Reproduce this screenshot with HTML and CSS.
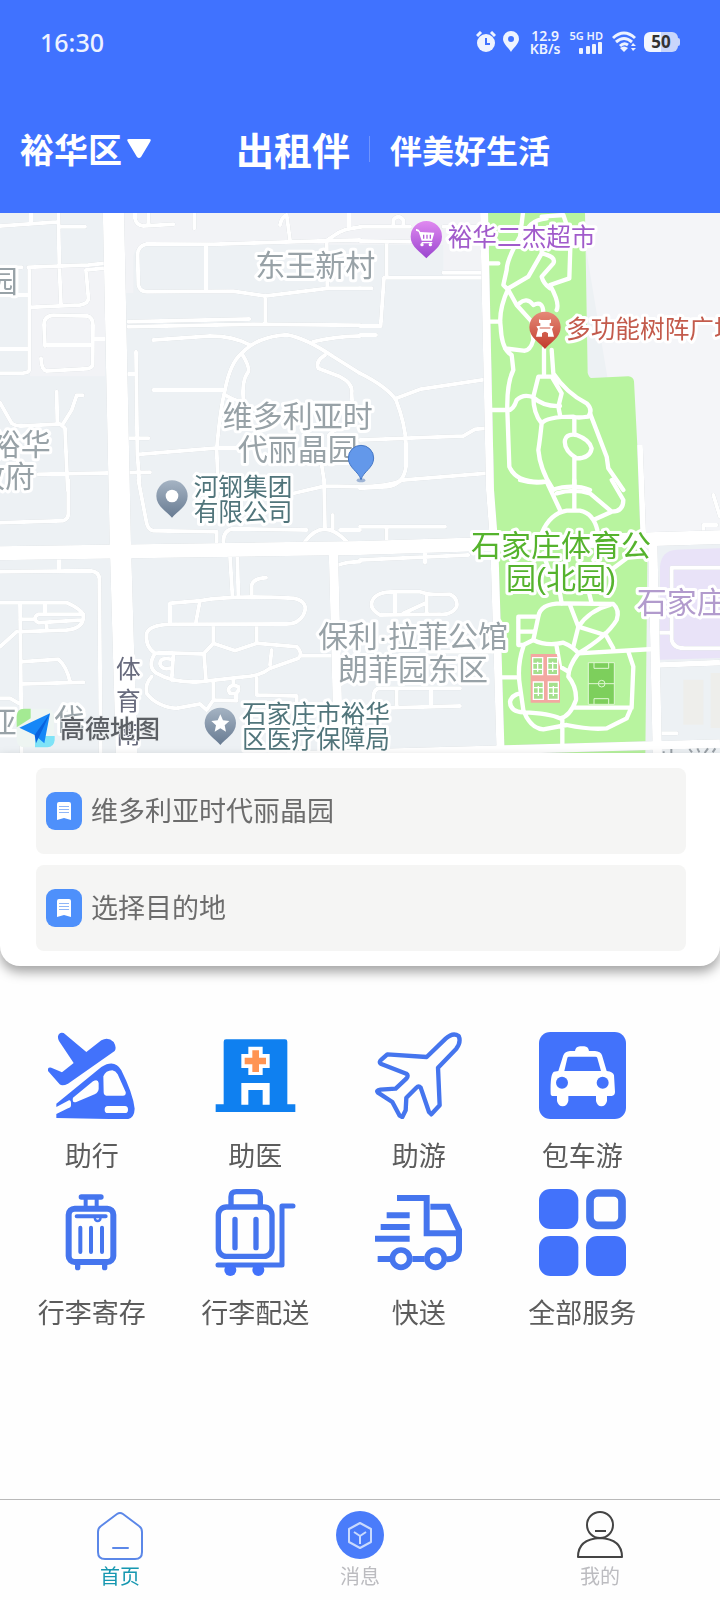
FILE: index.html
```html
<!DOCTYPE html>
<html lang="zh-CN">
<head>
    <meta charset="UTF-8">
    <meta name="viewport" content="width=device-width, initial-scale=1.0">
    <title>出租伴</title>
    <link rel="stylesheet" href="styles.css">
</head>
<body>
    <header class="header">
        <div class="status-bar">
            <span class="time">16:30</span>
            <div class="status-icons">
                <svg class="alarm" width="20" height="22" viewBox="0 0 20 22">
                    <circle cx="10" cy="12" r="9"/>
                    <path class="line" d="M1 5 L5 1 M15 1 L19 5"/>
                    <path class="cut" d="M10 7 V13 H14"/>
                </svg>
                <svg class="place" width="16" height="22" viewBox="0 0 16 22">
                    <path fill-rule="evenodd" d="M8 21 C6 17 0 13 0 8 A8 8 0 0 1 16 8 C16 13 10 17 8 21Z M8 5 A3 3 0 1 0 8 11 A3 3 0 1 0 8 5Z"/>
                </svg>
                <div class="speed"><span>12.9</span><span>KB/s</span></div>
                <div class="signal">
                    <span>5G HD</span>
                    <svg width="24" height="12" viewBox="0 0 24 12">
                        <rect x="0" y="6" width="4" height="6" rx="1"/>
                        <rect x="7" y="4" width="4" height="8" rx="1"/>
                        <rect x="13" y="2" width="4" height="10" rx="1"/>
                        <rect x="19" y="0" width="4" height="12" rx="1"/>
                    </svg>
                </div>
                <svg class="wifi" width="25" height="22" viewBox="0 0 25 22">
                    <path class="line" d="M1 7 Q12 -3 23 7 M4 11 Q12 4 20 11 M8 15 Q12 11 16 14"/>
                    <path d="M8 17 Q12 14 16 17 L12 21Z M19 15 L21 12 L24 15Z M19 17 H24 L21 20Z"/>
                </svg>
                <div class="battery">50</div>
            </div>
        </div>
        <div class="title-bar">
            <button class="district" type="button">裕华区
                <svg width="24" height="20" viewBox="0 0 24 20"><path d="M2 0 H22 Q25 0 23 3 L14 18 Q12 20 10 18 L1 3 Q-1 0 2 0Z"/></svg>
            </button>
            <h1>出租伴</h1>
            <p>伴美好生活</p>
        </div>
    </header>

    <section class="map">
        <svg viewBox="0 0 2160 1620" preserveAspectRatio="xMidYMid slice">
            <!-- 地块 -->
            <rect width="2160" height="1620" fill="#edf1f4"/>
            <path fill="#f2f3f6" d="M372 0 H1452 V190 H1330 V95 H990 L640 92 H440 Q405 95 400 130 V240 H372Z M90 160 H315 V490 H90Z"/>
            <path fill="#f4f5f8" d="M1740 0 H2160 V960 H1900Z"/>
            <path fill="#b8f49f" d="M1463 0 H1755 L1763 480 Q1768 496 1775 495 L1885 490 Q1900 491 1902 505 L1925 950 L1942 1050 L1936 1620 H1512 L1485 960Z"/>
            <path fill="#e9e3f8" d="M1980 1060 Q1985 1012 2030 1010 L2160 1006 V1335 L1980 1340Z"/>
            <path fill="#eeeeeb" d="M2050 1400 H2110 V1535 H2050Z M2132 1380 H2160 V1545 H2132Z"/>

            <!-- 小区道路 -->
            <g class="roads">
                <g transform="translate(0 -9)">
                    <path d="M0 48 L170 36 M93 0 V35 M175 0 L178 170 L183 285 M178 50 L255 50 M0 172 H65 M85 172 L265 165 L315 160 M88 172 V480 Q86 488 70 489 L0 490 M0 255 H85 M95 292 L240 285 Q268 280 265 262 L258 180 L310 175 M0 417 H85"/>
                    <path d="M315 387 H285 M135 408 L132 345 Q132 318 160 316 L262 318 Q278 322 279 345 L278 465 Q275 475 262 476 L140 483 Q124 480 123 445 M135 405 H275"/>
                    <path d="M0 578 L35 640 Q50 650 65 648 L180 642 L195 655 L203 840 M170 545 L172 640 M190 640 L215 600 L230 556 H248 M115 793 L450 787"/>
                    <path d="M405 0 V25 Q408 45 430 48 L520 43 M445 0 V43 M583 0 V55 M840 45 Q845 20 860 15 L870 90 M1080 52 Q1030 55 1000 78 L980 92 M1047 0 V52"/>
                    <path d="M1080 90 L980 92 L640 103 L440 102 Q412 108 413 135 L415 225 Q420 245 440 245 L700 244 L796 258 L985 235 H1080 M618 105 V240 M980 92 L982 235 M796 258 V340 M385 335 L748 327 M385 350 L760 343 L1080 346"/>
                    <path d="M460 390 L630 378 Q700 378 750 405 M655 840 L650 720 Q660 600 675 540 Q690 460 725 430 Q770 380 860 374 Q920 385 1000 440 L1080 490 M460 540 H670 M940 395 Q1000 380 1080 378"/>
                    <path d="M725 430 Q750 470 745 485 Q725 510 730 570 Q720 580 675 555 M975 435 Q945 455 955 475 L1020 500 Q1060 520 1055 550 L1060 640 Q990 660 985 680 M408 425 L412 730 L418 815 M385 492 H408 M385 685 H445 M420 733 L650 714 H720 M965 765 L972 810"/>
                </g>
                <g transform="translate(1080 -9)">
                    <path d="M0 50 H150 M100 50 V30 Q115 10 130 30 V50 M250 50 H370 M0 93 L150 95 M80 95 V200 M0 235 H35 M0 348 H62 L72 203 H370 M250 188 H370 M0 375 H48"/>
                    <path d="M0 490 Q80 530 108 570 Q135 640 138 700 V770 Q130 825 80 830 L0 835 M108 565 L180 538 L380 508 M0 690 L310 678 L345 658 L380 655 M130 810 L380 790"/>
                </g>
                <g transform="translate(0 801)">
                    <path d="M0 275 L270 272 Q300 275 298 300 L302 820 M177 235 V270 M0 128 L190 122 Q205 118 205 100 V0 M415 0 L440 130 Q445 150 460 152 L650 155 V185"/>
                    <path d="M0 368 H200 Q250 390 250 410 Q250 445 200 450 L60 455 M60 370 L65 820 M135 370 V400 M60 418 H100 M250 403 H115 Q95 415 115 428 L245 420 M140 430 V450 M0 500 L50 455 M65 545 L175 538 Q200 560 210 605 M65 612 L250 607 M0 655 H30 L60 672"/>
                    <path d="M670 185 Q670 150 700 146 L920 150 M880 40 L975 18 L1080 20 M972 0 L975 145 M998 105 V148 M915 185 Q970 110 1040 185 M1020 150 H1080 M690 228 L697 345 M712 228 L715 345 M755 345 V315 Q760 295 798 293 M1015 255 Q1040 245 1080 245"/>
                    <path d="M510 430 V370 L600 362 Q700 345 880 355 Q930 365 910 405 Q895 432 860 432 L510 433 Q450 435 440 460 Q435 500 465 520 M600 362 L588 425 M465 520 L490 518 L610 522 L640 490 V435 M640 490 L705 512 L770 490 V435 M770 490 L890 500 Q910 520 895 535 L810 565 Q780 590 720 592 L600 605 Q520 610 470 580 Q440 560 465 520"/>
                    <path d="M815 510 L810 555 M612 522 L618 600 M520 525 L515 600 M515 538 Q480 530 480 552 Q485 570 510 565 M905 527 H1010 M455 590 Q435 610 440 640 Q470 680 530 685 L600 672 L620 690 L640 660 V605 M640 660 L710 662 M770 595 V645 L890 648 V680 M685 630 Q690 610 715 620 Q720 645 690 640Z M708 640 V660 M700 598 V615"/>
                </g>
                <g transform="translate(1080 801)">
                    <path d="M0 20 Q80 20 130 0 M0 140 H255 M80 140 V180 M0 240 L325 225 M195 205 V248 M105 335 H180 Q200 345 270 343 Q295 355 290 380 Q275 405 240 403 L60 405 Q25 385 38 360 Q50 335 105 335 M105 335 V405 M200 345 V400 M130 400 L195 370 M210 515 H410"/>
                    <path d="M40 655 Q40 625 60 625 L300 625 M110 625 V680 M213 625 V675 M45 685 L300 678 M1080 263 H935 V480 Q940 505 975 505 H1080 M895 458 H935 M1030 150 V135 H1070 M1060 45 L1080 110 M895 760 H950"/>
                </g>
            </g>

            <!-- 主干道 -->
            <g class="main-roads">
                <path stroke-width="26" d="M860 1628 L2160 1592"/>
                <path stroke-width="17" d="M1975 1356 L2160 1349 M1920 696 L1930 970"/>
                <path stroke-width="28" d="M1000 1010 L1016 1620 M1958 980 L1972 1620"/>
                <path stroke-width="24" d="M1452 -10 L1470 831 L1483 1000 L1502 1630"/>
                <path stroke-width="42" d="M-10 1021 L1080 1005 L2170 972"/>
                <path stroke-width="64" d="M340 -20 L361 990 L380 1640"/>
            </g>

            <!-- 公园步道 -->
            <g class="park-roads">
                <g transform="translate(1080 -9)">
                    <path d="M490 0 L480 80 Q440 150 440 180 L430 225 L445 240 L470 285 L515 335 L520 390 Q510 425 490 422 L435 415 M445 235 Q415 300 422 350 Q425 420 455 435 L460 480 Q440 520 442 600 L448 770 Q470 820 550 815"/>
                    <path d="M560 25 Q500 30 490 90 M545 20 L610 15 L632 80 L628 205 L570 225 Q600 280 590 300 M545 90 V130 L505 200 L445 235 M545 130 Q590 140 580 160 L545 200 Q550 220 570 235 M478 280 Q500 260 520 285 Q550 270 550 310 M385 160 H415 M390 335 H420 M395 600 H440"/>
                    <path d="M552 415 V500 M575 420 L580 490 Q620 550 680 580 Q700 600 685 620 Q650 625 640 620 Q560 620 545 640 Q540 690 535 720 Q540 780 580 840 M445 600 Q460 600 470 570 Q490 550 520 562 Q550 590 600 588 M552 500 H535 L520 560 Q520 610 545 640 M552 500 H575 L605 550 L595 590 L600 615"/>
                    <path d="M643 625 V670 M615 690 Q620 670 650 675 Q690 690 695 715 Q690 745 650 745 Q610 720 615 690Z M643 745 V840 M690 610 L740 740 L745 775 L790 840 M575 840 Q640 820 690 840"/>
                </g>
                <g transform="translate(1080 801)">
                    <path d="M480 0 Q520 12 560 5 L600 90 M643 0 V88 M590 40 Q640 25 690 40 L755 95 M755 0 L790 60 Q790 95 755 95 L705 118 M545 160 Q570 100 620 92 H660 Q700 100 712 150 Q720 220 700 240 M550 220 Q560 260 600 340 L605 370 M800 235 L740 280 L685 330 L695 370"/>
                    <path d="M605 370 Q540 370 535 410 L520 480 L490 495 H475 V410 H535 M475 455 H520 M605 370 L760 372 Q780 390 770 420 Q740 470 655 520 M630 375 L655 440 L735 465 M750 375 Q690 390 655 440 L640 500 M735 460 L760 505 M655 520 L880 507"/>
                    <path d="M520 480 Q560 500 610 488 Q640 500 655 520 Q625 560 625 590 Q650 620 648 660 Q630 710 600 715 Q570 700 490 697 Q450 695 450 665 Q455 645 480 640 M490 500 Q470 560 480 620 L490 690 Q510 745 550 748 L620 735 Q690 750 740 745 L800 715 L815 680 L820 560 L805 515 M645 683 H815 M607 715 V800 M412 592 H475 M590 500 L600 560 L625 575"/>
                </g>
            </g>

            <!-- 球场 -->
            <g transform="translate(1080 801)">
                <path fill="#f3a8a1" d="M512 522 H590 L600 560 V668 H512Z"/>
                <path fill="#a5e08d" stroke="#fff" stroke-width="4" d="M518 533 H548 V584 H518Z M563 533 H593 V584 H563Z M520 606 H550 V658 H520Z M565 606 H595 V658 H565Z"/>
                <path fill="none" stroke="#fff" stroke-width="4" d="M518 550 H548 M518 568 H548 M563 550 H593 M563 568 H593 M520 623 H550 M520 640 H550 M565 623 H595 M565 640 H595 M533 545 V575 M578 545 V575 M535 618 V648 M580 618 V648"/>
                <rect x="685" y="548" width="78" height="125" fill="#7dcf5c"/>
                <path fill="none" stroke="#dff7d4" stroke-width="3" d="M685 548 H763 V673 H685Z M685 611 H763 M702 548 V565 H746 V548 M702 673 V656 H746 V673 M715 611 A10 10 0 1 0 735 611 A10 10 0 1 0 715 611"/>
            </g>

            <!-- 地名 -->
            <g class="area-label">
                <text x="946" y="188">东王新村</text>
                <text x="893" y="642">维多利亚时</text>
                <text x="893" y="741">代丽晶园</text>
                <text x="62" y="725">裕华</text>
                <text x="15" y="823">政府</text>
                <text x="8" y="238">园</text>
                <text x="1239" y="1302">保利·拉菲公馆</text>
                <text x="1239" y="1400">朗菲园东区</text>
                <text x="5" y="1560">亚</text>
                <text x="208" y="1552">代</text>
                <text class="park" x="1683" y="1029">石家庄体育公</text>
                <text class="park" x="1683" y="1128">园(北园)</text>
                <text class="school" x="2045" y="1201">石家庄</text>
            </g>
            <g class="poi-label">
                <text class="shop" x="1343" y="100">裕华二杰超市</text>
                <text class="scenic" x="1698" y="376">多功能树阵广场</text>
                <text x="581" y="849">河钢集团</text>
                <text x="581" y="925">有限公司</text>
                <text x="726" y="1529">石家庄市裕华</text>
                <text x="726" y="1605">区医疗保障局</text>
                <text class="road" x="348" y="1394">体</text>
                <text class="road" x="348" y="1492">育</text>
                <text class="road" x="348" y="1591">南</text>
            </g>
            <path fill="none" stroke="#9aa1a7" stroke-width="6" d="M2014 1608 V1620 M1988 1618 H1994 M2068 1608 L2076 1618 M2092 1606 L2098 1618 M2124 1606 L2114 1620 M2138 1618 L2146 1606"/>

            <!-- 兴趣点 -->
            <defs>
                <path id="pin" d="M0 65 C-14 47 -47 32 -47 0 A47 47 0 1 1 47 0 C47 32 14 47 0 65Z"/>
                <linearGradient id="purple" x2="0" y2="1"><stop stop-color="#e08af0"/><stop offset="1" stop-color="#9a45cf"/></linearGradient>
                <linearGradient id="red" x2="0" y2="1"><stop stop-color="#e58a78"/><stop offset="1" stop-color="#c23b2c"/></linearGradient>
                <linearGradient id="gray" x2="0" y2="1"><stop stop-color="#a5b3c3"/><stop offset="1" stop-color="#687b92"/></linearGradient>
            </defs>
            <g transform="translate(1279 71)">
                <use href="#pin" fill="url(#purple)"/>
                <path fill="#fff" d="M-31 -23 Q-22 -24 -18 -14 L24 -12 L17 12 H-14 L-23 -15 L-31 -18Z M-14 16 H18 V20 H-14Z"/>
                <circle cx="-13" cy="24" r="5" fill="#fff"/><circle cx="12" cy="24" r="5" fill="#fff"/>
                <path stroke="#b562d9" stroke-width="4" d="M-8 -6 V6 M2 -6 V6 M12 -6 V6"/>
            </g>
            <g transform="translate(1635 343)">
                <use href="#pin" fill="url(#red)"/>
                <path fill="#fff" d="M-18 -24 L-12 -22 H12 L18 -24 V-14 L14 -12 V-5 L26 -3 L21 5 L27 28 H9 V18 Q0 8 -9 18 V28 H-27 L-21 5 L-26 -3 L-14 -5 V-12 L-18 -14Z"/>
                <path stroke="#cf5a48" stroke-width="3" d="M-16 2 H16"/>
            </g>
            <g transform="translate(516 849)">
                <use href="#pin" fill="url(#gray)"/>
                <circle r="19" fill="#fff"/>
            </g>
            <g transform="translate(661 1531)">
                <use href="#pin" fill="url(#gray)"/>
                <path fill="#fff" d="M0 -27 L8 -9 L27 -7 L13 6 L17 25 L0 15 L-17 25 L-13 6 L-27 -7 L-8 -9Z"/>
            </g>
            <ellipse cx="1083" cy="802" rx="13" ry="6" fill="#9db3d4"/>
            <path fill="#6398ea" stroke="#4677c4" stroke-width="3" d="M1083 800 C1076 775 1045 765 1045 735 A38 38 0 1 1 1121 735 C1121 765 1090 775 1083 800Z"/>

            <!-- 高德地图 -->
            <g transform="translate(0 801)">
                <rect x="50" y="686" width="112" height="116" rx="22" fill="#eef5f2"/>
                <path fill="#a4ea93" d="M92 686 V715 L50 742 V710 Q50 686 72 686Z"/>
                <path fill="#7fe3f7" d="M105 802 V775 L138 768 H164 V780 Q162 802 142 802Z"/>
                <path fill="#1687f7" d="M58 743 L150 700 L133 790 L104 765Z"/>
                <path fill="#0a62dd" d="M104 765 L150 700 L108 790Z"/>
                <text class="amap" x="180" y="773">高德地图</text>
            </g>
        </svg>
    </section>

    <form class="trip">
        <label class="field">
            <svg width="36" height="38" viewBox="0 0 36 38">
                <rect width="36" height="38" rx="9" fill="#4e90fb"/>
                <path fill="#fff" d="M11 12 Q11 10 13 10 H23 Q25 10 25 12 V28 L18 26 L11 28Z"/>
                <path stroke="#8fb6f8" d="M13 14.5 H23 M13 17.5 H23 M13 20.5 H23"/>
            </svg>
            <input type="text" value="维多利亚时代丽晶园" aria-label="出发地">
        </label>
        <label class="field">
            <svg width="36" height="38" viewBox="0 0 36 38">
                <rect width="36" height="38" rx="9" fill="#4e90fb"/>
                <path fill="#fff" d="M11 12 Q11 10 13 10 H23 Q25 10 25 12 V28 L18 26 L11 28Z"/>
                <path stroke="#8fb6f8" d="M13 14.5 H23 M13 17.5 H23 M13 20.5 H23"/>
            </svg>
            <input type="text" placeholder="选择目的地" aria-label="目的地">
        </label>
    </form>

    <main class="services">
        <a class="service" href="#">
            <svg viewBox="55 65 261 261">
                <path class="fill" d="M85 78 Q88 64 102 68 L170 125 L215 90 Q235 78 252 95 Q262 112 255 122 L115 220 Q98 228 90 222 L55 182 Q52 170 65 172 L97 186 L132 158 L88 92 Q84 85 85 78Z"/>
                <path class="fill" fill-rule="evenodd" d="M80 280 L215 170 Q255 145 275 180 Q310 250 315 295 Q314 325 290 327 L80 323Z M221 198 Q228 180 248 180 Q258 182 264 192 L288 245 Q290 256 280 256 H230 Q222 255 222 245Z M130 262 L190 213 Q205 205 207 218 V235 Q207 245 195 252 L140 275 Q126 280 130 262Z M80 290 L118 270 Q125 268 124 285 Q124 292 115 294 L80 311Z M234 287 Q225 287 225 298 Q225 308 234 308 H286 Q295 308 295 298 Q295 287 286 287Z"/>
            </svg>
            <span>助行</span>
        </a>
        <a class="service" href="#">
            <svg viewBox="545 65 261 261">
                <path fill="#0f80f0" d="M580 94 Q580 87 587 87 H764 Q771 87 771 94 V282 H795 V305 H556 V282 H580Z"/>
                <path fill="#fff" d="M654 109 H697 V131 H718 V173 H697 V194 H654 V173 H633 V131 H654Z M633 218 H718 V283 H697 V239 H654 V283 H633Z"/>
                <path fill="#ff9452" d="M666 120 H686 V142 H707 V162 H686 V185 H666 V162 H643 V142 H666Z"/>
            </svg>
            <span>助医</span>
        </a>
        <a class="service" href="#">
            <svg viewBox="76 65 261 261">
                <path class="line" stroke-width="13" d="M231 140 L288 85 Q310 65 327 77 Q335 95 320 115 L265 172 L270 285 L245 312 L238 305 L213 232 Q207 225 200 232 L170 262 L168 300 L158 320 L150 316 L128 275 L85 247 Q78 240 92 238 L138 235 L170 205 Q178 195 170 190 L93 160 Q87 155 95 148 L113 132Z"/>
            </svg>
            <span>助游</span>
        </a>
        <a class="service" href="#">
            <svg viewBox="567 65 261 261">
                <rect class="fill" x="567" y="65" width="261" height="261" rx="34"/>
                <path fill="#fff" d="M602 250 Q600 190 612 184 L625 182 L640 135 Q645 123 660 122 H675 Q677 109 690 108 H703 Q715 109 717 122 H735 Q752 123 756 135 L770 182 Q790 184 792 195 L795 245 Q795 256 785 257 H771 V272 Q767 288 754 288 Q742 288 738 272 V257 H655 V272 Q651 288 638 288 Q625 288 621 272 V257 H610 Q602 257 602 250Z"/>
                <path class="fill" d="M657 139 H736 Q741 139 742 143 L753 182 H643 L652 143 Q653 139 657 139Z"/>
                <circle class="fill" cx="636" cy="217" r="18"/>
                <circle class="fill" cx="758" cy="217" r="18"/>
            </svg>
            <span>包车游</span>
        </a>
        <a class="service" href="#">
            <svg viewBox="55 57 261 261">
                <rect class="line" x="117" y="116" width="134" height="160" rx="18" stroke-width="18"/>
                <path class="line" stroke-width="16" d="M155 81 H214 M144 285 V293 M225 285 V293"/>
                <path class="line" stroke-width="12" d="M168 85 V108 M201 85 V108 M141 139 H228 M152 173 V246 M184 173 V246 M217 173 V246"/>
                <path class="line" stroke-width="7" d="M195 142 Q196 153 204 153 Q212 153 213 142"/>
            </svg>
            <span>行李寄存</span>
        </a>
        <a class="service" href="#">
            <svg viewBox="545 57 261 261">
                <rect class="line" x="564" y="111" width="161" height="148" rx="24" stroke-width="16"/>
                <path class="line" stroke-width="16" d="M602 108 V80 Q602 65 618 65 H674 Q690 65 690 80 V108 M614 148 V233 M677 148 V233"/>
                <path class="line" stroke-width="15" d="M563 285 H755 V108 H788"/>
                <circle class="fill" cx="600" cy="300" r="18"/>
                <circle class="fill" cx="684" cy="300" r="18"/>
            </svg>
            <span>行李配送</span>
        </a>
        <a class="service" href="#">
            <svg viewBox="76 57 261 261">
                <path class="line square" stroke-width="18" d="M142 84 H231 V190 H320 M242 110 H295 L328 180 V240 Q325 268 292 268 M111 136 H180 M93 171 H180 M76 206 H180 M84 267 H122 M188 267 H225"/>
                <circle class="line" cx="154" cy="266" r="26" stroke-width="17"/>
                <circle class="line" cx="258" cy="266" r="26" stroke-width="17"/>
            </svg>
            <span>快送</span>
        </a>
        <a class="service" href="#">
            <svg viewBox="567 57 261 261">
                <rect class="fill" x="567" y="57" width="118" height="120" rx="34"/>
                <rect class="line" x="720" y="69" width="96" height="97" rx="24" stroke-width="23"/>
                <rect class="fill" x="567" y="198" width="118" height="120" rx="34"/>
                <rect class="fill" x="708" y="198" width="120" height="120" rx="34"/>
            </svg>
            <span>全部服务</span>
        </a>
    </main>

    <nav class="tab-bar">
        <a class="tab active" href="#">
            <svg width="50" height="50" viewBox="0 0 50 50" fill="none" stroke="#5b87e8" stroke-width="2" stroke-linecap="round">
                <path d="M22 4 Q25 2 28 4 L44 16 Q47 18 47 22 V42 Q47 49 40 49 H10 Q3 49 3 42 V22 Q3 18 6 16Z M18 38 H33"/>
            </svg>
            <span>首页</span>
        </a>
        <a class="tab" href="#">
            <svg width="50" height="50" viewBox="0 0 50 50" fill="none" stroke="#c9dafd" stroke-width="2" stroke-linejoin="round">
                <circle cx="25" cy="25" r="24" fill="#4a7cfa" stroke="none"/>
                <path d="M25 13 L36 19 V32 L25 38 L14 32 V19Z M19 22 L25 26 L31 22 M25 26 V34"/>
            </svg>
            <span>消息</span>
        </a>
        <a class="tab" href="#">
            <svg width="50" height="50" viewBox="0 0 50 50" fill="none" stroke="#444" stroke-width="2" stroke-linejoin="round">
                <circle cx="25" cy="15" r="13"/>
                <path d="M20 21 H31 M3 47 Q3 29 25 28 Q47 29 47 47Z"/>
            </svg>
            <span>我的</span>
        </a>
    </nav>
</body>
</html>
```
FILE: styles.css
```css
:root {
    --main-blue: #4072ff;
    --icon-blue: #4272fb;
}
* {
    box-sizing: border-box;
}
body {
    font-family: "Noto Sans CJK SC", sans-serif;
    margin: 0;
    min-height: 100vh;
    display: flex;
    flex-direction: column;
    background: #fefefe;
}
a {
    color: inherit;
    text-decoration: none;
}

/* 顶部 */
.header {
    background: var(--main-blue);
    color: white;
    padding: 22px 40px 34px 20px;
}
.status-bar {
    display: flex;
    justify-content: space-between;
    align-items: center;
    height: 40px;
    padding-left: 20px;
    font-family: "Noto Sans", sans-serif;
    color: #eef3ff;
}
.time {
    font-size: 25px;
    font-weight: 500;
}
.status-icons {
    display: flex;
    align-items: center;
    fill: #eef3ff;
}
.status-icons .line {
    fill: none;
    stroke: #eef3ff;
    stroke-width: 3;
}
.status-icons .cut {
    fill: none;
    stroke: var(--main-blue);
    stroke-width: 2;
}
.place {
    margin-left: 7px;
}
.speed {
    display: flex;
    flex-direction: column;
    margin-left: 11px;
    font-size: 14px;
    line-height: 13px;
    font-weight: 600;
    text-align: center;
}
.signal {
    display: flex;
    flex-direction: column;
    align-items: flex-end;
    margin-left: 9px;
    font-size: 11px;
    line-height: 12px;
    font-weight: 600;
}
.wifi {
    margin: 0 7px 0 9px;
}
.battery {
    position: relative;
    width: 34px;
    height: 20px;
    margin-right: 2px;
    border-radius: 6px;
    background: linear-gradient(90deg, #f2f6ff 50%, #c9d6fb 50%);
    color: #333;
    font-size: 17px;
    line-height: 20px;
    font-weight: 700;
    text-align: center;
}
.battery::after {
    content: "";
    position: absolute;
    left: 100%;
    top: 6px;
    width: 2px;
    height: 8px;
    border-radius: 0 2px 2px 0;
    background: #c9d6fb;
}
.title-bar {
    display: flex;
    align-items: center;
    height: 60px;
    margin-top: 57px;
}
.district {
    display: flex;
    align-items: center;
    gap: 5px;
    padding: 0;
    border: none;
    background: none;
    color: white;
    font-family: inherit;
    font-size: 34px;
    line-height: 60px;
    font-weight: 700;
    cursor: pointer;
}
.district svg {
    fill: white;
}
.title-bar h1 {
    margin: 0 0 0 85px;
    font-size: 38px;
    line-height: 60px;
}
.title-bar p {
    margin: 0 0 0 19px;
    padding-left: 21px;
    font-size: 32px;
    line-height: 60px;
    font-weight: 700;
    background: linear-gradient(#6f94ff, #6f94ff) left center / 1px 26px no-repeat;
}

/* 地图 */
.map svg {
    display: block;
    width: 100%;
    height: 540px;
}
.roads,
.main-roads,
.park-roads {
    fill: none;
    stroke: white;
    stroke-linejoin: round;
}
.roads {
    stroke-width: 12;
    stroke-linecap: round;
}
.roads,
.main-roads {
    filter: drop-shadow(0 0 2px #c3cace);
}
.park-roads {
    stroke-width: 13;
    stroke-linecap: round;
}
.area-label,
.poi-label {
    stroke: white;
    stroke-width: 18;
    stroke-linejoin: round;
    paint-order: stroke;
}
.area-label {
    font-family: "Liberation Sans", "Noto Sans CJK SC", sans-serif;
    font-size: 90px;
    text-anchor: middle;
    fill: #98a2a7;
}
.poi-label {
    font-size: 74px;
    fill: #51757b;
}
.area-label .park {
    fill: #55b32d;
}
.area-label .school {
    fill: #b29bcd;
}
.poi-label .shop {
    fill: #a15bcb;
}
.poi-label .scenic {
    fill: #c35b4c;
}
.poi-label .road {
    fill: #686b7d;
}
.amap {
    font-size: 75px;
    font-weight: 500;
    fill: #5b5f64;
    stroke: #e8ebed;
    stroke-width: 5;
    paint-order: stroke;
}

/* 行程 */
.trip {
    display: flex;
    flex-direction: column;
    gap: 11px;
    padding: 15px 34px 15px 36px;
    background: white;
    border-radius: 0 0 20px 20px;
    box-shadow: 0 6px 12px rgba(0,0,0,0.36);
}
.field {
    display: flex;
    align-items: center;
    gap: 9px;
    height: 86px;
    padding: 0 10px;
    border-radius: 8px;
    background: #f5f5f4;
}
.field input {
    flex: 1;
    min-width: 0;
    padding: 0 0 2px;
    border: none;
    outline: none;
    background: none;
    color: #6c6c6c;
    font-family: inherit;
    font-size: 27px;
    line-height: 40px;
}
.field input::placeholder {
    color: #6c6c6c;
    opacity: 1;
}

/* 服务 */
.services {
    flex: 1;
    display: grid;
    grid-template-columns: repeat(4, 1fr);
    align-content: start;
    row-gap: 14px;
    padding: 66px 56px 40px 10px;
}
.service {
    display: flex;
    flex-direction: column;
    align-items: center;
    gap: 16px;
    color: #5c5c5c;
    font-size: 27px;
    line-height: 40px;
}
.service svg {
    width: 87px;
    height: 87px;
}
.service .fill {
    fill: var(--icon-blue);
}
.service .line {
    fill: none;
    stroke: #4575ee;
    stroke-linecap: round;
    stroke-linejoin: round;
}
.service .square {
    stroke-linecap: butt;
    stroke-linejoin: miter;
}

/* 底部导航 */
.tab-bar {
    display: flex;
    border-top: 1px solid #b9b9b9;
    padding: 10px 0;
}
.tab {
    flex: 1;
    display: flex;
    flex-direction: column;
    align-items: center;
    gap: 2px;
    color: #bcbcc0;
    font-size: 20px;
    line-height: 28px;
}
.tab.active {
    color: #1697b0;
}
```
